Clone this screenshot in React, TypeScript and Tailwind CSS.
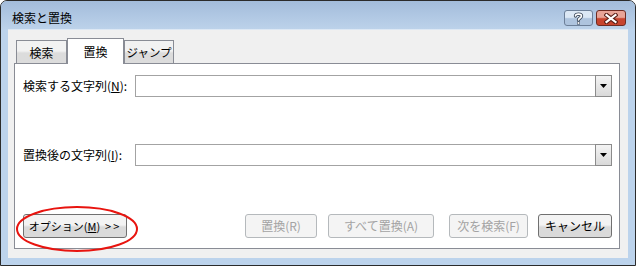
import type { ReactNode } from "react";

function HelpGlyph() {
  return (
    <svg width="11" height="13" viewBox="0 0 11 13">
      <path
        d="M2.5 4 C2.5 1.5 8.5 1.5 8.5 4 C8.5 6 5.5 6 5.5 8"
        fill="none"
        stroke="#3d4a5c"
        strokeWidth="3.4"
        strokeLinecap="round"
      />
      <path
        d="M2.5 4 C2.5 1.5 8.5 1.5 8.5 4 C8.5 6 5.5 6 5.5 8"
        fill="none"
        stroke="#ffffff"
        strokeWidth="1.6"
        strokeLinecap="round"
      />
      <rect x="4" y="9.5" width="3" height="3" fill="#3d4a5c" />
      <rect x="4.6" y="10.1" width="1.8" height="1.8" fill="#ffffff" />
    </svg>
  );
}

function CloseGlyph() {
  return (
    <svg width="14" height="11" viewBox="0 0 14 11">
      <path d="M2.5 2 L11.5 9 M11.5 2 L2.5 9" stroke="#5a1f17" strokeWidth="4.2" strokeLinecap="square" />
      <path d="M2.5 2 L11.5 9 M11.5 2 L2.5 9" stroke="#ffffff" strokeWidth="2.2" strokeLinecap="square" />
    </svg>
  );
}

function ComboBox() {
  return (
    <div className="flex h-[22px] flex-1 border border-r-0 border-[#a3a3a3] bg-white">
      <div className="flex-1" />
      <div className="-my-px flex w-[17px] items-center justify-center border border-[#8b8b8b] bg-gradient-to-b from-[#f4f4f4] to-[#d9d9d9]">
        <svg width="7" height="4" viewBox="0 0 7 4">
          <path d="M0 0 H7 L3.5 4 Z" fill="#000" />
        </svg>
      </div>
    </div>
  );
}

function Btn({ children, w, disabled }: { children: ReactNode; w: string; disabled?: boolean }) {
  return (
    <div
      className={
        disabled
          ? `${w} flex h-[24px] items-center justify-center rounded-[3px] border border-[#b5b9bc] bg-[#f4f4f4] text-[#a3a3a3]`
          : `${w} flex h-[24px] items-center justify-center rounded-[3px] border border-[#707070] bg-gradient-to-b from-[#f3f3f3] from-45% to-[#dadada] to-55% text-black`
      }
    >
      <span className="whitespace-pre">{children}</span>
    </div>
  );
}

export default function App() {
  return (
    <div className="h-[266px] w-[636px] bg-white text-[12px] leading-none text-black [font-family:'Noto_Sans_CJK_JP','Noto_Sans',sans-serif]">
      <div className="relative flex h-full w-full flex-col rounded-t-[7px] border border-[#2b2b2b] bg-[#bcd3ec]">
        {/* title bar */}
        <div className="flex h-[28px] items-start justify-between rounded-t-[6px] bg-gradient-to-b from-[#a3bcdb] to-[#bcd2ea] pl-[11px] pr-[9px]">
          <div className="pt-[11px] text-[12px]">検索と置換</div>
          <div className="flex gap-[3px] pt-[9px]">
            <div className="flex h-[16px] w-[29px] items-center justify-center rounded-[3px] border border-[#6c7f98] bg-gradient-to-b from-[#dce8f5] from-45% to-[#aec4de] to-55%">
              <HelpGlyph />
            </div>
            <div className="flex h-[16px] w-[30px] items-center justify-center rounded-[3px] border border-[#6e2b22] bg-gradient-to-b from-[#e8a497] from-45% to-[#c7452f] to-55%">
              <CloseGlyph />
            </div>
          </div>
        </div>

        {/* client */}
        <div className="flex flex-1 flex-col px-[7px] pb-[7px]">
          <div className="flex flex-1 flex-col border-t border-[#dde8f4] bg-[#f0f0f0] pb-[9px] pl-[6px] pr-[8px] pt-[8px]">
            {/* tabs */}
            <div className="flex items-end pl-[2px]">
              <div className="-mb-px flex h-[24px] w-[51px] items-center justify-center border border-[#898c95] bg-gradient-to-b from-[#f2f2f2] from-45% to-[#dcdcdc] to-55% pt-[1px]">
                検索
              </div>
              <div className="relative z-10 -mb-px flex h-[26px] w-[57px] items-center justify-center border border-b-0 border-[#898c95] bg-white">
                置換
              </div>
              <div className="-mb-px flex h-[24px] w-[50px] items-center justify-center border border-[#898c95] bg-gradient-to-b from-[#f2f2f2] from-45% to-[#dcdcdc] to-55% pt-[1px] text-[11.5px]">
                ジャンプ
              </div>
            </div>

            {/* panel */}
            <div className="flex flex-1 flex-col border border-[#898c95] bg-white pb-[10px] pl-[8px] pr-[7px] pt-[11px]">
              <div className="flex items-center">
                <div className="w-[112px]">
                  検索する文字列(<span className="underline">N</span>):
                </div>
                <ComboBox />
              </div>
              <div className="mt-[47px] flex items-center">
                <div className="w-[112px]">
                  置換後の文字列(<span className="underline">I</span>):
                </div>
                <ComboBox />
              </div>
              <div className="mt-auto flex items-center">
                <Btn w="w-[104px]">
                  <span className="text-[11px]">
                    オプション(<span className="underline">M</span>){"  "}
                    <span className="tracking-[2px]">&gt;&gt;</span>
                  </span>
                </Btn>
                <div className="ml-[118px]">
                  <Btn w="w-[72px]" disabled>
                    置換(R)
                  </Btn>
                </div>
                <div className="ml-[11px]">
                  <Btn w="w-[106px]" disabled>
                    すべて置換(A)
                  </Btn>
                </div>
                <div className="ml-[15px]">
                  <Btn w="w-[79px]" disabled>
                    次を検索(F)
                  </Btn>
                </div>
                <div className="ml-[10px]">
                  <Btn w="w-[74px]">キャンセル</Btn>
                </div>
              </div>
            </div>
          </div>
        </div>

        {/* red annotation ellipse */}
        <svg className="pointer-events-none absolute left-[14px] top-[204px]" width="124" height="48" viewBox="0 0 124 48">
          <ellipse cx="62" cy="24" rx="60" ry="22" fill="none" stroke="#e8140f" strokeWidth="2" />
        </svg>
      </div>
    </div>
  );
}
